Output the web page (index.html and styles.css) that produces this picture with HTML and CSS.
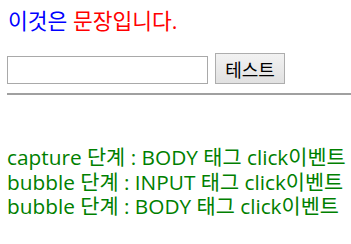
FILE: index.html
```html
<!DOCTYPE html>
<html lang="ko">
<head>
    <meta charset="UTF-8">
    <title>이벤트 단계</title>
    <link rel="stylesheet" href="styles.css">
</head>
<body>
    <p class="sentence"><span class="blue">이것은 </span><span class="red">문장입니다.</span></p>
    <div class="form">
        <input type="text" class="field">
        <button class="btn">테스트</button>
    </div>
    <hr class="line">
    <div class="log">
        <div>capture 단계 : BODY 태그 click이벤트</div>
        <div>bubble 단계 : INPUT 태그 click이벤트</div>
        <div>bubble 단계 : BODY 태그 click이벤트</div>
    </div>
</body>
</html>
```

FILE: styles.css
```css
body {
    margin: 0;
    padding: 0 0 0 7px;
    font-family: "Open Sans", "Noto Sans CJK KR", sans-serif;
    font-size: 20.8px;
    overflow: hidden;
}
.sentence {
    margin: 8px 0 0 1px;
    font-size: 21.5px;
    line-height: 26px;
}
.blue {
    color: #0000ff;
}
.red {
    color: #ff0000;
}
.form {
    display: flex;
    align-items: flex-end;
    gap: 7px;
    margin-top: 19px;
}
.field {
    width: 201px;
    height: 28px;
    box-sizing: border-box;
    margin: 0;
    border: 1px solid #a9a9a9;
}
.btn {
    width: 70px;
    height: 31px;
    box-sizing: border-box;
    margin: 0;
    border: 1px solid #adadad;
    background: linear-gradient(#f2f2f2, #e1e1e1);
    font-family: "Noto Sans CJK KR", sans-serif;
    font-size: 18px;
    line-height: 1;
    color: #000;
}
.line {
    margin: 9px 0 0 0;
    border: 0;
    border-top: 2px solid #a0a0a0;
}
.log {
    margin-top: 50px;
    color: #008000;
    line-height: 24.5px;
}
```
